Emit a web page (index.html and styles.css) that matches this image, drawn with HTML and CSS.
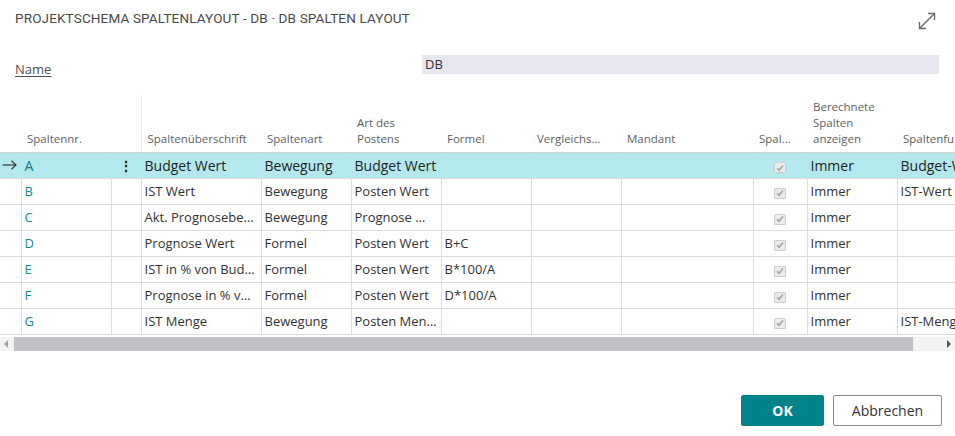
FILE: index.html
```html
<!DOCTYPE html>
<html lang="de">
<head>
<meta charset="utf-8">
<title>Projektschema Spaltenlayout</title>
<link rel="stylesheet" href="styles.css">
</head>
<body>
<div class="dialog">
  <header class="titlebar">
    <h1 class="title">PROJEKTSCHEMA SPALTENLAYOUT - DB · DB SPALTEN LAYOUT</h1>
    <button class="expand" type="button" aria-label="Erweitern">
      <svg width="20" height="20" viewBox="0 0 20 20" fill="none" stroke="#6b6b6b" stroke-width="1.4">
        <path d="M2.5 17.5 L17.5 2.5"/>
        <path d="M11 2.5 H17.5 V9"/>
        <path d="M2.5 11 V17.5 H9"/>
      </svg>
    </button>
  </header>

  <div class="name-row">
    <span class="name-label">Name</span>
    <div class="name-field">DB</div>
  </div>

  <div class="grid-wrap">
    <table class="grid">
      <colgroup>
        <col class="c-ind"><col class="c-nr"><col class="c-menu"><col class="c-head">
        <col class="c-w90"><col class="c-w90"><col class="c-w90"><col class="c-w90">
        <col class="c-mand"><col class="c-chk"><col class="c-w90"><col class="c-last">
      </colgroup>
      <thead>
        <tr>
          <th></th>
          <th>Spaltennr.</th>
          <th></th>
          <th class="sep">Spaltenüberschrift</th>
          <th>Spaltenart</th>
          <th>Art des<br>Postens</th>
          <th>Formel</th>
          <th>Vergleichs…</th>
          <th>Mandant</th>
          <th>Spal…</th>
          <th>Berechnete<br>Spalten<br>anzeigen</th>
          <th>Spaltenfunktion</th>
        </tr>
      </thead>
      <tbody>
        <tr class="current">
          <td class="ind"><svg width="15" height="10" viewBox="0 0 15 10" fill="none" stroke="#3a3a3a" stroke-width="1.2"><path d="M0.5 5 H14"/><path d="M9.5 0.8 L14 5 L9.5 9.2"/></svg></td>
          <td class="nr">A</td>
          <td class="menu">⋮</td>
          <td>Budget Wert</td>
          <td>Bewegung</td>
          <td>Budget Wert</td>
          <td></td><td></td><td></td>
          <td class="chk"><span class="box"><svg width="8" height="8" viewBox="0 0 8 8"><path d="M1 4.2 L3 6.2 L7 1.5" fill="none" stroke="#a3a3a3" stroke-width="1.6"/></svg></span></td>
          <td>Immer</td>
          <td>Budget-Wert</td>
        </tr>
        <tr>
          <td></td>
          <td class="nr">B</td>
          <td></td>
          <td>IST Wert</td>
          <td>Bewegung</td>
          <td>Posten Wert</td>
          <td></td><td></td><td></td>
          <td class="chk"><span class="box"><svg width="8" height="8" viewBox="0 0 8 8"><path d="M1 4.2 L3 6.2 L7 1.5" fill="none" stroke="#a3a3a3" stroke-width="1.6"/></svg></span></td>
          <td>Immer</td>
          <td>IST-Wert</td>
        </tr>
        <tr>
          <td></td>
          <td class="nr">C</td>
          <td></td>
          <td>Akt. Prognosebe…</td>
          <td>Bewegung</td>
          <td>Prognose …</td>
          <td></td><td></td><td></td>
          <td class="chk"><span class="box"><svg width="8" height="8" viewBox="0 0 8 8"><path d="M1 4.2 L3 6.2 L7 1.5" fill="none" stroke="#a3a3a3" stroke-width="1.6"/></svg></span></td>
          <td>Immer</td>
          <td></td>
        </tr>
        <tr>
          <td></td>
          <td class="nr">D</td>
          <td></td>
          <td>Prognose Wert</td>
          <td>Formel</td>
          <td>Posten Wert</td>
          <td>B+C</td>
          <td></td><td></td>
          <td class="chk"><span class="box"><svg width="8" height="8" viewBox="0 0 8 8"><path d="M1 4.2 L3 6.2 L7 1.5" fill="none" stroke="#a3a3a3" stroke-width="1.6"/></svg></span></td>
          <td>Immer</td>
          <td></td>
        </tr>
        <tr>
          <td></td>
          <td class="nr">E</td>
          <td></td>
          <td>IST in % von Bud…</td>
          <td>Formel</td>
          <td>Posten Wert</td>
          <td>B*100/A</td>
          <td></td><td></td>
          <td class="chk"><span class="box"><svg width="8" height="8" viewBox="0 0 8 8"><path d="M1 4.2 L3 6.2 L7 1.5" fill="none" stroke="#a3a3a3" stroke-width="1.6"/></svg></span></td>
          <td>Immer</td>
          <td></td>
        </tr>
        <tr>
          <td></td>
          <td class="nr">F</td>
          <td></td>
          <td>Prognose in % v…</td>
          <td>Formel</td>
          <td>Posten Wert</td>
          <td>D*100/A</td>
          <td></td><td></td>
          <td class="chk"><span class="box"><svg width="8" height="8" viewBox="0 0 8 8"><path d="M1 4.2 L3 6.2 L7 1.5" fill="none" stroke="#a3a3a3" stroke-width="1.6"/></svg></span></td>
          <td>Immer</td>
          <td></td>
        </tr>
        <tr>
          <td></td>
          <td class="nr">G</td>
          <td></td>
          <td>IST Menge</td>
          <td>Bewegung</td>
          <td>Posten Men…</td>
          <td></td><td></td><td></td>
          <td class="chk"><span class="box"><svg width="8" height="8" viewBox="0 0 8 8"><path d="M1 4.2 L3 6.2 L7 1.5" fill="none" stroke="#a3a3a3" stroke-width="1.6"/></svg></span></td>
          <td>Immer</td>
          <td>IST-Menge</td>
        </tr>
      </tbody>
    </table>
  </div>

  <div class="hscroll">
    <span class="arrow-left"></span>
    <div class="track"><div class="thumb"></div></div>
    <span class="arrow-right"></span>
  </div>

  <footer class="actions">
    <button class="btn primary" type="button">OK</button>
    <button class="btn" type="button">Abbrechen</button>
  </footer>
</div>
</body>
</html>
```

FILE: styles.css
```css
* { box-sizing: border-box; }

html, body {
  margin: 0;
  padding: 0;
  background: #fff;
}

body {
  font-family: "Open Sans", "Noto Sans", sans-serif;
  color: #333;
}

.dialog {
  width: 955px;
  height: 436px;
  overflow: hidden;
}

/* title bar */
.titlebar {
  display: flex;
  justify-content: space-between;
  align-items: flex-start;
  padding: 10px 18px 0 15px;
  height: 40px;
}

.title {
  margin: 0;
  font-family: "Roboto", "Liberation Sans", sans-serif;
  font-weight: 400;
  font-size: 13.5px;
  letter-spacing: 0.15px;
  line-height: 16px;
  color: #4a4a4a;
}

.expand {
  border: 0;
  background: none;
  padding: 0;
  margin-top: 1px;
  width: 20px;
  height: 20px;
}

/* name field */
.name-row {
  display: flex;
  align-items: flex-start;
  margin-top: 15px;
  height: 19px;
}

.name-label {
  width: 422px;
  padding-left: 15px;
  padding-top: 6px;
  font-size: 13px;
  line-height: 17px;
  color: #505050;
  text-decoration: underline;
  text-underline-offset: 2px;
}

.name-field {
  width: 517px;
  height: 19px;
  background: #e6e6ee;
  padding-left: 3px;
  font-size: 13px;
  line-height: 19px;
  color: #333;
}

/* grid */
.grid-wrap {
  margin-top: 21px;
  overflow: hidden;
  width: 955px;
}

.grid {
  table-layout: fixed;
  border-collapse: collapse;
  width: 1017px;
}

.c-ind  { width: 21px; }
.c-nr   { width: 90px; }
.c-menu { width: 30px; }
.c-head { width: 120px; }
.c-w90  { width: 90px; }
.c-mand { width: 132px; }
.c-chk  { width: 54px; }
.c-last { width: 120px; }

.grid th {
  height: 57px;
  vertical-align: bottom;
  text-align: left;
  font-weight: 400;
  font-size: 11.5px;
  line-height: 16px;
  color: #616161;
  padding: 0 6px 5px;
  white-space: nowrap;
  overflow: hidden;
  border-bottom: 1px solid #d4d4d4;
}

.grid th.sep { border-left: 1px solid #ececec; }

.grid td {
  height: 26px;
  padding: 0 3px;
  font-size: 13px;
  color: #333;
  white-space: nowrap;
  overflow: hidden;
  border-bottom: 1px solid #dcdcdc;
  border-right: 1px solid #dcdcdc;
}

.grid td.nr { color: #138a8c; }

.grid td.ind {
  padding: 0 0 0 2px;
  line-height: 0;
}

.grid td.menu {
  text-align: center;
  font-size: 16px;
  font-weight: 700;
  color: #444;
}

.grid td.chk {
  text-align: right;
  padding-right: 21px;
}

.box {
  display: inline-flex;
  align-items: center;
  justify-content: center;
  width: 12px;
  height: 11px;
  border: 1px solid #cdcdcd;
  border-radius: 1px;
  background: #ebebeb;
  vertical-align: -1px;
}

.grid tr.current td {
  background: #b3e9ec;
  font-size: 14px;
  color: #1f1f1f;
  border-right-color: #d2dde0;
}

.grid tr.current td.nr { color: #11797c; }

/* horizontal scrollbar */
.hscroll {
  display: flex;
  align-items: center;
  height: 14px;
  margin-top: 2px;
  background: #f3f2f5;
}

.arrow-left,
.arrow-right {
  width: 0;
  height: 0;
  border-top: 4px solid transparent;
  border-bottom: 4px solid transparent;
}

.arrow-left {
  margin: 0 6px 0 4px;
  border-right: 4px solid #a8a8a8;
}

.arrow-right {
  margin: 0 4px 0 31px;
  border-left: 4px solid #555;
}

.track {
  flex: 1;
  height: 14px;
}

.thumb {
  width: 899px;
  height: 14px;
  background: #c3c1c5;
}

/* footer buttons */
.actions {
  display: flex;
  justify-content: flex-end;
  gap: 9px;
  padding-right: 13px;
  margin-top: 44px;
}

.btn {
  height: 31px;
  min-width: 83px;
  border: 1px solid #8c8c8c;
  border-radius: 2px;
  background: #fff;
  font-family: "Open Sans", "Noto Sans", sans-serif;
  font-size: 14px;
  color: #333;
  padding: 0 16px;
}

.btn.primary {
  background: #008489;
  border-color: #008489;
  color: #fff;
  font-weight: 700;
}

.btn:not(.primary) { width: 109px; }
```
